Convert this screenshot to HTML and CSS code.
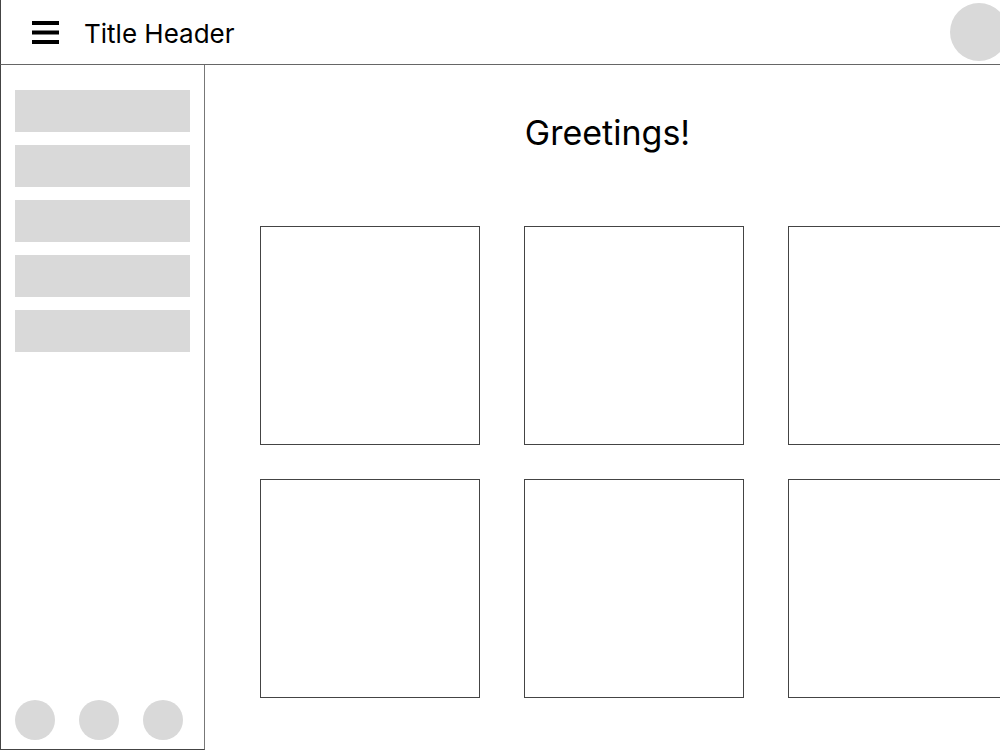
FILE: index.html
```html
<!DOCTYPE html>
<html lang="en">
<head>
<meta charset="utf-8">
<title>Title Header</title>
<link rel="stylesheet" href="styles.css">
</head>
<body>
<div class="app">
  <header class="topbar">
    <button class="menu-btn" aria-label="Menu">
      <svg width="27" height="23" viewBox="0 0 27 23">
        <rect x="0" y="0" width="27" height="4" fill="#000"/>
        <rect x="0" y="9.5" width="27" height="4" fill="#000"/>
        <rect x="0" y="19" width="27" height="4" fill="#000"/>
      </svg>
    </button>
    <h1 class="title">Title Header</h1>
    <div class="avatar"></div>
  </header>
  <div class="body-row">
    <aside class="sidebar">
      <nav class="nav">
        <div class="nav-item"></div>
        <div class="nav-item"></div>
        <div class="nav-item"></div>
        <div class="nav-item"></div>
        <div class="nav-item"></div>
      </nav>
      <div class="sidebar-actions">
        <span class="dot"></span>
        <span class="dot"></span>
        <span class="dot"></span>
      </div>
    </aside>
    <main class="content">
      <h2 class="greeting">Greetings!</h2>
      <div class="cards">
        <div class="card"></div>
        <div class="card"></div>
        <div class="card"></div>
        <div class="card"></div>
        <div class="card"></div>
        <div class="card"></div>
      </div>
    </main>
  </div>
</div>
</body>
</html>
```

FILE: styles.css
```css
*, *::before, *::after {
  box-sizing: border-box;
}

html, body {
  margin: 0;
  padding: 0;
  overflow: hidden;
  background: #fff;
}

body {
  font-family: Inter, "Noto Sans", sans-serif;
  color: #000;
}

.app {
  width: 1010px;
  height: 750px;
  display: flex;
  flex-direction: column;
}

/* top bar */
.topbar {
  height: 65px;
  flex: none;
  display: flex;
  align-items: center;
  border-left: 1px solid #444;
  border-bottom: 1px solid #666;
  padding: 0 2px 0 31px;
}

.menu-btn {
  border: 0;
  background: none;
  padding: 0;
  margin: 0;
  width: 27px;
  height: 23px;
  display: block;
}

.menu-btn svg {
  display: block;
}

.title {
  margin: 0 0 0 25px;
  padding-top: 4px;
  font-size: 26px;
  font-weight: 400;
  line-height: 32px;
  flex: 1;
}

.avatar {
  width: 58px;
  height: 58px;
  border-radius: 50%;
  background: #d9d9d9;
}

/* below header */
.body-row {
  flex: 1;
  display: flex;
  min-height: 0;
}

.sidebar {
  width: 205px;
  flex: none;
  border-left: 1px solid #444;
  border-right: 1px solid #777;
  border-bottom: 1px solid #444;
  padding: 25px 14px 9px 14px;
  display: flex;
  flex-direction: column;
  justify-content: space-between;
}

.nav {
  display: flex;
  flex-direction: column;
  gap: 13px;
}

.nav-item {
  height: 42px;
  background: #d9d9d9;
}

.sidebar-actions {
  display: flex;
  justify-content: space-between;
  width: 168px;
}

.dot {
  width: 40px;
  height: 40px;
  border-radius: 50%;
  background: #d9d9d9;
}

/* main content */
.content {
  flex: 1;
  padding: 47px 0 0 55px;
}

.greeting {
  margin: 0 0 72px -55px;
  text-align: center;
  font-size: 34px;
  font-weight: 400;
  line-height: 42px;
}

.cards {
  display: grid;
  grid-template-columns: repeat(3, 220px);
  grid-auto-rows: 219px;
  column-gap: 44px;
  row-gap: 34px;
}

.card {
  border: 1px solid #444;
}
```
